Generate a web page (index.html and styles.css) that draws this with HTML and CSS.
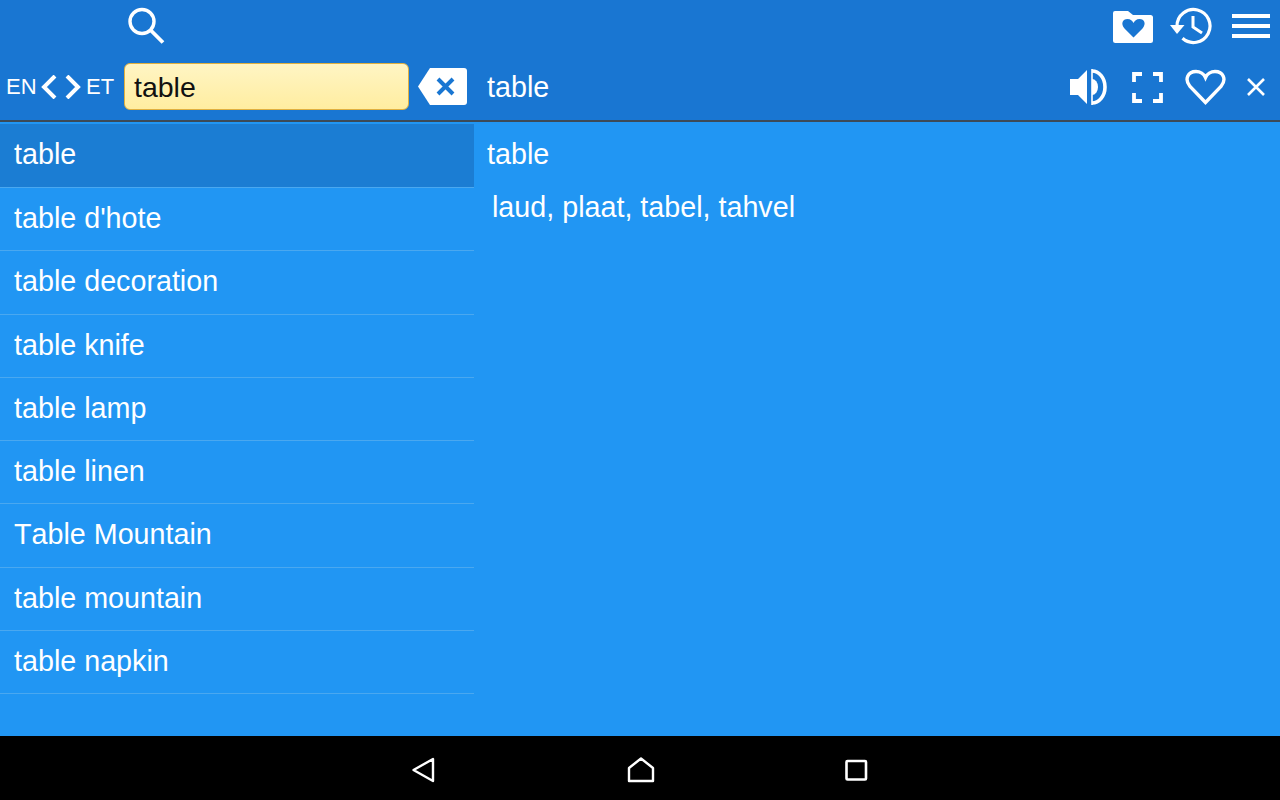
FILE: index.html
```html
<!DOCTYPE html>
<html>
<head>
    <title>English Estonian Dictionary</title>
    <link rel="stylesheet" href="styles.css">
</head>
<body>
    <div id="application">
        <div id="header">
            <div class="top-row">
                <svg class="search-icon" width="38" height="38" viewBox="0 0 38 38"><circle cx="15" cy="14.500" r="12" fill="none" stroke="#fff" stroke-width="3.4"/><path d="M23.500 23 L36 35.500" stroke="#fff" stroke-width="3.800" fill="none"/></svg>
                <div class="top-icons">
                    <svg class="folder-icon" width="40" height="32" viewBox="0 0 40 32"><path d="M2 0 H15 L20 4 H37.500 Q40 4 40 6.500 V29.500 Q40 32 37.500 32 H2.500 Q0 32 0 29.500 V2 Q0 0 2 0 Z" fill="#fff"/><path d="M20.500 26.500 L11.500 17.500 C7.500 13 9.500 8 14.500 8 C17.500 8 19.500 10 20.500 12 C21.500 10 23.500 8 26.500 8 C31.500 8 33.500 13 29.500 17.500 Z" fill="#1976d2"/></svg>
                    <svg class="history-icon" width="42" height="38" viewBox="0 0 42 38"><path d="M7 19 A16.500 16.500 0 1 1 12.500 31.300" fill="none" stroke="#fff" stroke-width="3.200"/><path d="M0 18 H14.500 L7 27 Z" fill="#fff"/><path d="M23 9 V20 L32 26" fill="none" stroke="#fff" stroke-width="3"/></svg>
                    <div class="menu-icon"><span></span><span></span><span></span></div>
                </div>
            </div>
            <div class="bottom-row">
                <div class="search-side">
                    <span class="lang">EN</span>
                    <svg class="chevrons" width="40" height="24" viewBox="0 0 40 24"><path d="M14 1 L3 12 L14 23 M26 1 L37 12 L26 23" fill="none" stroke="#fff" stroke-width="4"/></svg>
                    <span class="lang">ET</span>
                    <div class="search-box">table</div>
                    <svg class="clear-icon" width="49" height="37" viewBox="0 0 49 37"><path d="M12 0 H46 Q49 0 49 3 V34 Q49 37 46 37 H12 L0 18.500 Z" fill="#fff"/><path d="M20 11 L35 26 M35 11 L20 26" stroke="#1976d2" stroke-width="4" fill="none"/></svg>
                </div>
                <div class="title-side">
                    <span class="title">table</span>
                    <div class="word-icons">
                        <svg class="speaker-icon" width="38" height="36" viewBox="0 0 38 36"><path d="M1 10 H9 L18 1 V35 L9 26 H1 Z" fill="#fff"/><path d="M23 0 V36" stroke="#fff" stroke-width="1.600" fill="none"/><path d="M23 10 A6 8 0 0 1 23 26 Z" fill="#fff"/><path d="M23 2 A13 16 0 0 1 23 34" fill="none" stroke="#fff" stroke-width="3.600"/></svg>
                        <svg class="full-icon" width="31" height="31" viewBox="0 0 31 31"><path d="M2 10 V2 H10 M21 2 H29 V10 M2 21 V29 H10 M21 29 H29 V21" fill="none" stroke="#fff" stroke-width="3.800"/></svg>
                        <svg class="heart-icon" width="41" height="36" viewBox="0 0 41 36"><path d="M20.500 33.500 L5 17.500 C-1 10 3 2.500 11 2.500 C15 2.500 19 5 20.500 8.500 C22 5 26 2.500 30 2.500 C38 2.500 42 10 36 17.500 Z" fill="none" stroke="#fff" stroke-width="3.400"/></svg>
                        <svg width="20" height="20" viewBox="0 0 20 20"><path d="M2 2 L18 18 M18 2 L2 18" stroke="#fff" stroke-width="2.600" fill="none"/></svg>
                    </div>
                </div>
            </div>
        </div>
        <div id="content">
            <div id="word-list">
                <div class="word-row selected">table</div>
                <div class="word-row">table d'hote</div>
                <div class="word-row">table decoration</div>
                <div class="word-row">table knife</div>
                <div class="word-row">table lamp</div>
                <div class="word-row">table linen</div>
                <div class="word-row">Table Mountain</div>
                <div class="word-row">table mountain</div>
                <div class="word-row">table napkin</div>
            </div>
            <div id="definition">
                <p class="def-word">table</p>
                <p class="def-text">laud, plaat, tabel, tahvel</p>
            </div>
        </div>
        <div id="navbar">
            <svg width="26" height="26" viewBox="0 0 26 26"><path d="M2.500 13 L22 2 V24 Z" fill="none" stroke="#fff" stroke-width="2.400" stroke-linejoin="round"/></svg>
            <svg width="28" height="26" viewBox="0 0 28 26"><path d="M2 11 L14 1.500 L26 11 V24 H2 Z" fill="none" stroke="#fff" stroke-width="2.400" stroke-linejoin="round"/></svg>
            <svg width="24" height="24" viewBox="0 0 24 24"><rect x="1.500" y="3" width="19.500" height="18.500" fill="none" stroke="#fff" stroke-width="2.600" rx="1"/></svg>
        </div>
    </div>
</body>
</html>
```

FILE: styles.css
```css
html, body {
    margin: 0;
    padding: 0;
}

#application {
    width: 1280px;
    height: 800px;
    display: flex;
    flex-direction: column;
    overflow: hidden;
    background-color: #2196f3;
    font-family: "Liberation Sans", sans-serif;
    font-kerning: none;
    color: #fff;
}

#header {
    height: 120px;
    flex-shrink: 0;
    background-color: #1976d2;
    border-bottom: 2px solid #3c4a57;
}

.top-row {
    height: 56px;
    display: flex;
    align-items: flex-start;
    justify-content: space-between;
}

.search-icon {
    margin: 7px 0 0 127px;
}

.top-icons {
    display: flex;
    align-items: flex-start;
    padding: 7px 10px 0 0;
}

.folder-icon {
    margin-top: 4px;
}

.history-icon {
    margin: 0 20px 0 17px;
}

.menu-icon {
    display: flex;
    flex-direction: column;
    gap: 6px;
    width: 38px;
    padding-top: 7px;
}

.menu-icon span {
    height: 4px;
    background-color: #fff;
}

.bottom-row {
    height: 64px;
    display: flex;
}

.search-side {
    width: 474px;
    display: flex;
    align-items: center;
    padding: 0 7px 3px 6px;
    box-sizing: border-box;
}

.lang {
    font-size: 22px;
    width: 30px;
}

.chevrons {
    margin: 0 5px;
}

.search-box {
    width: 285px;
    height: 47px;
    flex-shrink: 0;
    box-sizing: border-box;
    margin: 0 9px 0 8px;
    padding-left: 9px;
    border: 1px solid #e0b040;
    border-radius: 6px;
    background: linear-gradient(#fff5c4, #ffeda0);
    color: #111;
    font-size: 28.500px;
    line-height: 46px;
}

.title-side {
    flex: 1;
    display: flex;
    align-items: center;
    justify-content: space-between;
    padding: 0 14px 2px 13px;
}

.title {
    font-size: 28.700px;
}

.word-icons {
    display: flex;
    align-items: center;
}

.speaker-icon {
    margin-right: 25px;
}

.full-icon {
    margin-right: 22px;
}

.heart-icon {
    margin-right: 20px;
}

#content {
    flex: 1;
    display: flex;
    padding-top: 2.600px;
}

#word-list {
    width: 474px;
    flex-shrink: 0;
}

.word-row {
    height: 62.320px;
    line-height: 60px;
    padding-left: 14px;
    border-bottom: 1px solid #4aa8f0;
    font-size: 28.700px;
}

.word-row.selected {
    background-color: #1b7dd3;
    box-shadow: 0 -1px 0 #1b7dd3;
    line-height: 58px;
}

#definition {
    flex: 1;
    padding-left: 13px;
    font-size: 28.700px;
}

.def-word {
    margin: 0;
    line-height: 58px;
}

.def-text {
    margin: 2px 0 0 5px;
    line-height: 44px;
}

#navbar {
    height: 64px;
    flex-shrink: 0;
    box-sizing: border-box;
    padding: 3px 0 0 411px;
    background-color: #000;
    display: flex;
    align-items: center;
    gap: 190px;
}
```
